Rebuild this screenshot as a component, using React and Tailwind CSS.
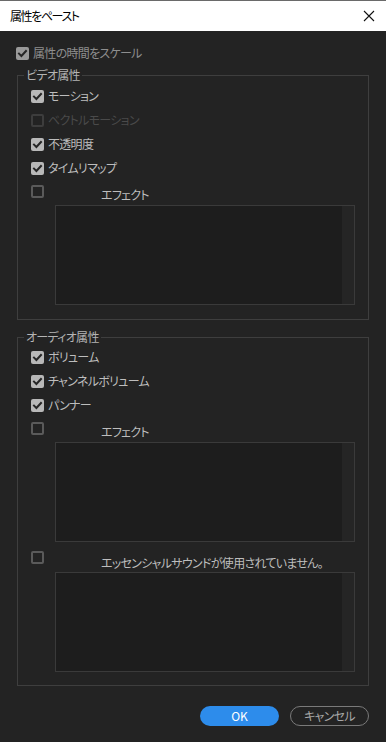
import React from 'react';

const FONT = "font-['Noto_Sans_CJK_JP','Noto_Sans',sans-serif] [font-feature-settings:'palt']";

// small square checkbox, drawn like the Premiere dialog
const Box = ({ checked, tone = 'normal' }) => {
  if (checked) {
    const bg = tone === 'muted' ? 'bg-[#9a9a9a]' : 'bg-[#b8b8b8]';
    return (
      <div className={`w-[13px] h-[13px] rounded-[2px] ${bg} flex items-center justify-center shrink-0`}>
        <svg width="11" height="11" viewBox="0 0 11 11">
          <path d="M2 5.6 L4.4 8 L9 3" fill="none" stroke="#262626" strokeWidth="2" strokeLinecap="square" />
        </svg>
      </div>
    );
  }
  const border = tone === 'disabled' ? 'border-[#3d3d3d]' : 'border-[#5a5a5a]';
  return <div className={`w-[13px] h-[13px] rounded-[2px] border-2 ${border} shrink-0`} />;
};

const Row = ({ checked, tone, label }) => {
  const color =
    tone === 'disabled' ? 'text-[#4a4a4a]' : tone === 'muted' ? 'text-[#8e8e8e]' : 'text-[#bdbdbd]';
  return (
    <div className="flex items-center h-[14px]">
      <Box checked={checked} tone={tone} />
      <span className={`ml-[4px] text-[12px] leading-[14px] tracking-[-0.7px] whitespace-nowrap ${color}`}>{label}</span>
    </div>
  );
};

const ListBox = () => (
  <div className="ml-[24px] h-[100px] border border-[#3a3a3a] bg-[#1d1d1d] flex">
    <div className="flex-1" />
    <div className="w-[12px] bg-[#252525]" />
  </div>
);

// checkbox with its caption set off to the right and a list under it
const EffectBlock = ({ label, labelOffset = 3, gap = 6 }) => (
  <div className="flex flex-col">
    <div className="flex items-start h-[14px]">
      <Box checked={false} />
      <span
        className="ml-[57px] text-[12px] leading-[14px] tracking-[-0.7px] text-[#bdbdbd] whitespace-nowrap"
        style={{ marginTop: labelOffset }}
      >
        {label}
      </span>
    </div>
    <div style={{ height: gap }} />
    <ListBox />
  </div>
);

// group box: the caption breaks the top border
const Group = ({ title, children, className = '' }) => (
  <div className={`mx-[17px] flex flex-col ${className}`}>
    <div className="flex h-[14px]">
      <div className="w-[7px] mt-[7px] border-t border-l border-[#3e3e3e]" />
      <span className="px-[2px] text-[12px] leading-[14px] tracking-[-0.7px] text-[#b4b4b4] whitespace-nowrap">{title}</span>
      <div className="flex-1 mt-[7px] border-t border-r border-[#3e3e3e]" />
    </div>
    <div className="border-l border-r border-b border-[#3e3e3e]">{children}</div>
  </div>
);

export default function App() {
  return (
    <div className={`w-[386px] h-[742px] flex flex-col bg-[#232323] ${FONT}`}>
      {/* title bar */}
      <div className="h-[31px] bg-white border-t border-[#6a6a6a] flex items-center justify-between pl-[10px] pr-[10px]">
        <span className="text-[12px] text-black leading-[14px] tracking-[-1.4px]">属性をペースト</span>
        <svg width="12" height="12" viewBox="0 0 12 12" className="mr-[1px]">
          <path d="M1 1 L11 11 M11 1 L1 11" stroke="#111" strokeWidth="1.1" />
        </svg>
      </div>

      <div className="flex-1 flex flex-col pt-[15px]">
        <div className="pl-[16px]">
          <Row checked tone="muted" label="属性の時間をスケール" />
        </div>

        <Group title="ビデオ属性" className="mt-[8px]">
          <div className="px-[13px] pt-[7px] pb-[14px] flex flex-col gap-[10px]">
            <Row checked label="モーション" />
            <Row checked={false} tone="disabled" label="ベクトルモーション" />
            <Row checked label="不透明度" />
            <Row checked label="タイムリマップ" />
            <EffectBlock label="エフェクト" />
          </div>
        </Group>

        <Group title="オーディオ属性" className="mt-[10px]">
          <div className="px-[13px] pt-[6px] pb-[13px] flex flex-col gap-[10px]">
            <Row checked label="ボリューム" />
            <Row checked label="チャンネルボリューム" />
            <Row checked label="パンナー" />
            <EffectBlock label="エフェクト" />
            <div className="mt-[-1px]">
              <EffectBlock label="エッセンシャルサウンドが使用されていません。" labelOffset={5} gap={7} />
            </div>
          </div>
        </Group>

        <div className="flex justify-end gap-[11px] pr-[17px] mt-[20px]">
          <button className="w-[79px] h-[20px] rounded-full bg-[#2d8ceb] text-white text-[12px] leading-[14px]">
            OK
          </button>
          <button className="w-[79px] h-[20px] rounded-full border border-[#7a7a7a] text-[#a8a8a8] text-[12px] leading-[14px] tracking-[-0.7px]">
            キャンセル
          </button>
        </div>
      </div>
    </div>
  );
}
